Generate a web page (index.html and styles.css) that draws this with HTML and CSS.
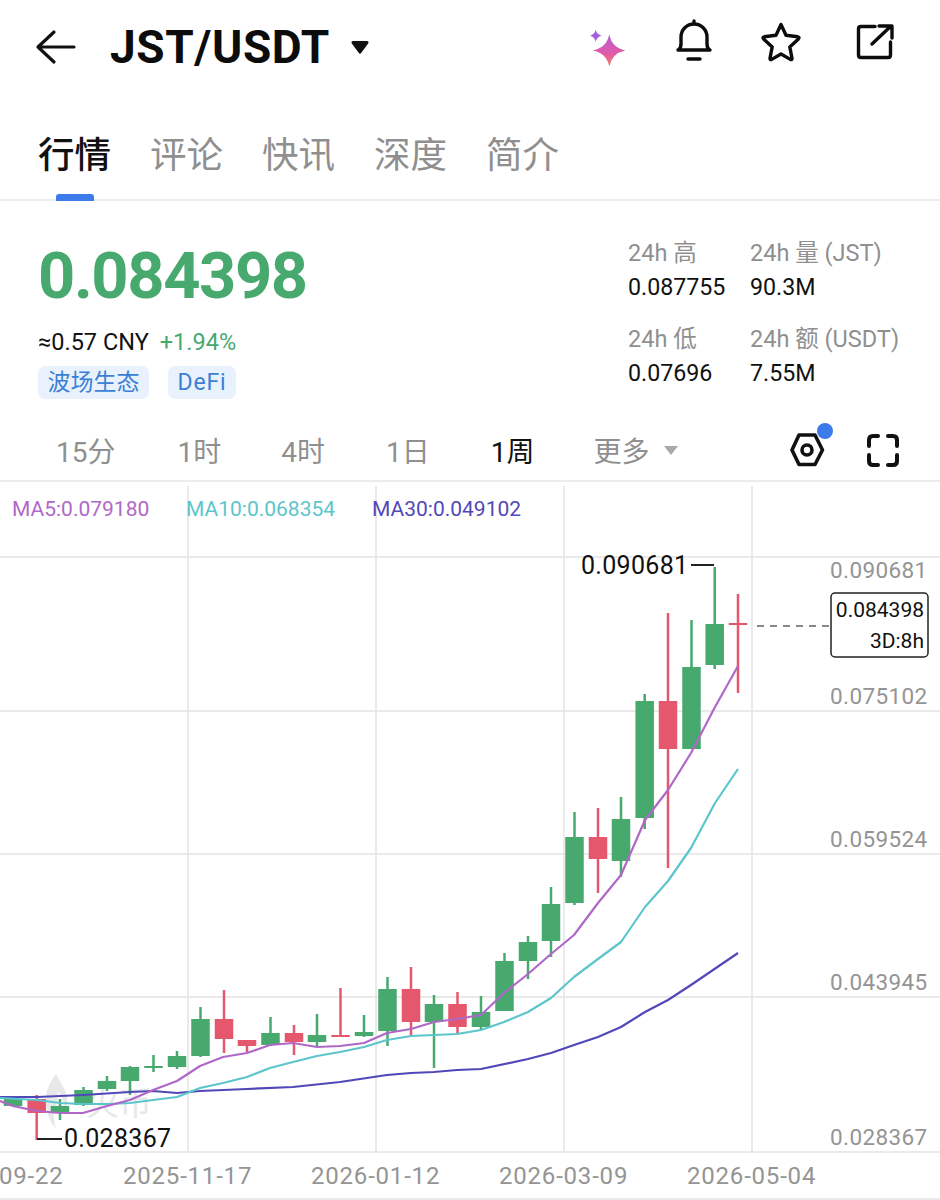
FILE: index.html
```html
<!DOCTYPE html>
<html lang="en">
<head>
    <meta charset="UTF-8">
    <meta name="viewport" content="width=device-width, initial-scale=1.0">
    <title>JST/USDT</title>
    <link rel="stylesheet" href="styles.css">
</head>
<body>
    <header class="header">
        <svg class="back-icon" viewBox="34 28 44 38"><path d="M74 47H38M54 32 38 47l16 15"/></svg>
        <h1 class="pair">JST/USDT</h1>
        <svg class="caret-icon" viewBox="0 0 18 14"><path d="M2 1h14a1.500 1.500 0 0 1 1.200 2.400L10.300 12.800a1.600 1.600 0 0 1-2.600 0L.8 3.400A1.500 1.500 0 0 1 2 1z"/></svg>
        <div class="actions">
            <svg class="action" viewBox="590 18 40 48">
                <defs>
                    <linearGradient id="spark" x1="0" y1="0" x2="0" y2="1">
                        <stop offset="0" stop-color="#b65fd6"/>
                        <stop offset=".6" stop-color="#e25aa8"/>
                        <stop offset="1" stop-color="#f2815a"/>
                    </linearGradient>
                </defs>
                <path fill="url(#spark)" d="M609.300 34q2.200 13.500 16 16.500-13.800 3-16 16.500-2.200-13.500-16.500-16.500 14.300-3 16.500-16.500z"/>
                <path fill="#a05fdc" d="M595.700 29.500q.8 5 6 6.200-5.200 1.200-6 6.300-.8-5.100-6-6.300 5.200-1.200 6-6.200z"/>
            </svg>
            <svg class="action action-bell" viewBox="674 18 40 48">
                <path d="M678 50q3-1.500 3-6v-7a13 13 0 0 1 26 0v7q0 4.500 3 6zM694 24v-3M688 59h12"/>
            </svg>
            <svg class="action action-star" viewBox="761 18 40 48">
                <path d="M781 24.500l5 10.800 11.800 1.500q2 .5 .6 2.100l-8.600 8 2.200 11.300q.2 2-1.700 1.200L781 54l-9.300 5.400q-1.900.8-1.700-1.200l2.200-11.300-8.600-8q-1.400-1.600.6-2.100l11.800-1.500z"/>
            </svg>
            <svg class="action action-share" viewBox="855 18 40 48">
                <path d="M875 26.500h-14q-2.500 0-2.500 2.500v26q0 2.500 2.500 2.500h27q2.500 0 2.500-2.500v-13M872 44l19-18M879 26h13v12"/>
            </svg>
        </div>
    </header>

    <nav class="tabs">
        <a class="tab active">行情</a>
        <a class="tab">评论</a>
        <a class="tab">快讯</a>
        <a class="tab">深度</a>
        <a class="tab">简介</a>
    </nav>

    <section class="quote">
        <div class="quote-main">
            <div class="price">0.084398</div>
            <div class="quote-sub">
                <span class="cny">≈0.57 CNY</span>
                <span class="change">+1.94%</span>
            </div>
            <div class="badges">
                <span class="badge">波场生态</span>
                <span class="badge badge-en">DeFi</span>
            </div>
        </div>
        <div class="stats">
            <div class="stat">
                <span class="stat-label">24h 高</span>
                <span class="stat-value">0.087755</span>
            </div>
            <div class="stat">
                <span class="stat-label">24h 量 (JST)</span>
                <span class="stat-value">90.3M</span>
            </div>
            <div class="stat">
                <span class="stat-label">24h 低</span>
                <span class="stat-value">0.07696</span>
            </div>
            <div class="stat">
                <span class="stat-label">24h 额 (USDT)</span>
                <span class="stat-value">7.55M</span>
            </div>
        </div>
    </section>

    <div class="periods">
        <span class="period p-15m">15分</span>
        <span class="period p-1h">1时</span>
        <span class="period p-4h">4时</span>
        <span class="period p-1d">1日</span>
        <span class="period p-1w active">1周</span>
        <span class="period p-more">更多</span>
        <span class="more-caret"></span>
        <span class="indicator-btn">
            <svg class="hex-icon" viewBox="788 430 38 38"><path d="M799 435h16l7.500 15-7.500 14.500h-16L792 450z"/><circle cx="807" cy="450" r="5"/></svg>
            <span class="dot"></span>
        </span>
        <svg class="full-icon" viewBox="864 432 38 38"><path d="M869 447v-6q0-4 4-4h5M888 437h5q4 0 4 4v6M897 456v6q0 4-4 4h-5M878 466h-5q-4 0-4-4v-6"/></svg>
    </div>

    <div class="chart">
        <svg id="chart" class="chart-svg" viewBox="0 486 940 714">
            <g class="grid">
                <path d="M188 486V1152M376 486V1152M564 486V1152M752 486V1152"/>
                <path d="M0 557H940M0 711H940M0 854H940M0 997H940M0 1152H940M0 1199H940"/>
            </g>

            <g class="watermark">
                <path d="M56 1074q-14 18-9 36 2 12 9 18-4-10-1-20 3-8 3-16 8 8 6 20 6-10 1-22-5-8-9-16z"/>
                <text x="86" y="1115">火币</text>
            </g>

            <g id="candles"></g>

            <polyline class="ma ma30" points="0,1097 37,1097 83,1095 130,1092 153,1091 177,1093 200,1091 247,1089 293,1087 340,1082 387,1075 411,1073 434,1072 457,1070 481,1069 528,1059 551,1053 574,1045 598,1037 621,1027 645,1012 668,1000 691,985 738,953"/>
            <polyline class="ma ma10" points="0,1098 37,1100 60,1103 83,1104 107,1104 130,1103 153,1100 177,1097 200,1088 223,1083 247,1077 270,1068 293,1062 317,1056 340,1052 364,1047 387,1040 411,1036 434,1035 457,1034 481,1030 504,1022 528,1012 551,998 574,977 598,959 621,942 645,907 668,881 691,848 715,803 738,769"/>
            <polyline class="ma ma5" points="0,1101 13,1106 37,1111 60,1113 83,1113 107,1106 130,1100 153,1090 177,1081 200,1066 223,1057 247,1053 270,1045 293,1043 317,1047 340,1046 364,1043 387,1033 411,1029 434,1022 457,1019 481,1015 504,993 528,974 551,954 574,935 598,903 621,875 645,820 668,790 691,753 715,707 738,666"/>

            <text class="extreme" x="581" y="574">0.090681</text>
            <path class="extreme-line" d="M691 565H714M37 1139H62"/>
            <text class="extreme" x="64" y="1147">0.028367</text>

            <text class="legend ma5-text" x="12" y="516">MA5:0.079180</text>
            <text class="legend ma10-text" x="186" y="516">MA10:0.068354</text>
            <text class="legend ma30-text" x="372" y="516">MA30:0.049102</text>

            <text class="axis" x="830" y="578">0.090681</text>
            <text class="axis" x="830" y="704">0.075102</text>
            <text class="axis" x="830" y="847">0.059524</text>
            <text class="axis" x="830" y="990">0.043945</text>
            <text class="axis" x="830" y="1145">0.028367</text>

            <text class="date" x="-1" y="1184">09-22</text>
            <text class="date" x="123" y="1184">2025-11-17</text>
            <text class="date" x="311" y="1184">2026-01-12</text>
            <text class="date" x="499" y="1184">2026-03-09</text>
            <text class="date" x="687" y="1184">2026-05-04</text>

            <path class="last-line" d="M757 626H831"/>
            <rect class="last-box" x="831" y="593" width="97" height="64" rx="4"/>
            <text class="last-text" x="924" y="617">0.084398</text>
            <text class="last-text" x="924" y="648">3D:8h</text>
        </svg>
    </div>

    <script src="chart.js"></script>
</body>
</html>
```

FILE: styles.css
```css
* {
    margin: 0;
    padding: 0;
    box-sizing: border-box;
}

body {
    font-family: Roboto, 'Noto Sans CJK SC', sans-serif;
    background-color: #fff;
    color: #111;
    width: 940px;
    height: 1200px;
    overflow: hidden;
}

/* top bar */
.header {
    display: flex;
    align-items: center;
    height: 94px;
    padding-left: 34px;
}

.back-icon {
    width: 44px;
    height: 38px;
    fill: none;
    stroke: #111;
    stroke-width: 3.2;
    stroke-linecap: round;
    stroke-linejoin: round;
}

.pair {
    font-size: 46px;
    font-weight: 700;
    letter-spacing: 0.6px;
    margin-left: 32px;
    color: #0c0c0c;
}

.caret-icon {
    width: 18px;
    height: 14px;
    margin-left: 21px;
    fill: #111;
}

.actions {
    display: flex;
    margin-left: auto;
    padding-right: 45px;
    margin-top: -10px;
}

.action {
    width: 40px;
    height: 48px;
    fill: none;
    stroke: #0c0c0c;
    stroke-width: 3.4;
    stroke-linecap: round;
    stroke-linejoin: round;
}

.action:first-child {
    stroke: none;
}

.action-bell {
    margin-left: 44px;
}

.action-star {
    margin-left: 47px;
}

.action-share {
    margin-left: 54px;
}

/* tabs */
.tabs {
    display: flex;
    gap: 39px;
    height: 107px;
    padding: 38px 0 0 38px;
    border-bottom: 2px solid #ebeced;
}

.tab {
    position: relative;
    font-size: 36.5px;
    line-height: 48px;
    color: #8f8f8f;
    height: 69px;
}

.tab.active {
    color: #111;
    font-weight: 500;
}

.tab.active::after {
    content: '';
    position: absolute;
    left: 18px;
    bottom: 0;
    width: 38px;
    height: 7px;
    border-radius: 3px 3px 0 0;
    background-color: #3b7bea;
}

/* price block */
.quote {
    display: flex;
    justify-content: space-between;
    height: 218px;
    padding: 37px 0 0 38px;
}

.price {
    font-size: 65px;
    font-weight: 700;
    letter-spacing: -1.4px;
    line-height: 76px;
    color: #48a96f;
}

.quote-sub {
    display: flex;
    gap: 11px;
    margin-top: 13px;
    font-size: 23.5px;
    line-height: 30px;
}

.change {
    color: #48a96f;
}

.badges {
    display: flex;
    gap: 19px;
    margin-top: 9px;
}

.badge {
    padding: 0 9.500px;
    font-size: 23px;
    line-height: 33px;
    border-radius: 7px;
    color: #3b7fd6;
    background-color: #e9f2fc;
}

.badge-en {
    letter-spacing: 0.8px;
}

.stats {
    display: grid;
    grid-template-columns: 122px 190px;
    grid-auto-rows: 86px;
}

.stat {
    display: flex;
    flex-direction: column;
    gap: 4px;
}

.stat-label {
    font-size: 23.5px;
    line-height: 30px;
    color: #8f8f8f;
}

.stat-value {
    font-size: 23.2px;
    line-height: 30px;
    color: #111;
}

/* period row */
.periods {
    display: flex;
    align-items: center;
    height: 63px;
    padding-left: 56px;
    border-bottom: 2px solid #ebeced;
    font-size: 28px;
    color: #8f8f8f;
}

.period.active {
    color: #111;
}

.p-1h {
    margin-left: 62px;
}

.p-4h {
    margin-left: 60px;
}

.p-1d {
    margin-left: 61px;
}

.p-1w {
    margin-left: 61px;
}

.p-more {
    margin-left: 59px;
}

.more-caret {
    width: 0;
    height: 0;
    margin: 2px 0 0 14px;
    border-left: 7px solid transparent;
    border-right: 7px solid transparent;
    border-top: 9px solid #a9a9a9;
}

.indicator-btn {
    position: relative;
    display: flex;
    margin-left: auto;
    margin-top: -2px;
}

.hex-icon {
    width: 38px;
    height: 38px;
    fill: none;
    stroke: #111;
    stroke-width: 3.6;
    stroke-linejoin: round;
}

.dot {
    position: absolute;
    top: -7px;
    right: -7px;
    width: 16px;
    height: 16px;
    border-radius: 50%;
    background-color: #3b7bea;
}

.full-icon {
    width: 38px;
    height: 38px;
    margin: 0 38px 0 38px;
    fill: none;
    stroke: #111;
    stroke-width: 4;
    stroke-linecap: round;
}

/* chart */
.chart {
    margin-top: 4px;
}

.chart-svg {
    display: block;
    width: 940px;
    height: 714px;
}

.grid path {
    fill: none;
    stroke: #e3e3e3;
    stroke-width: 1.5;
}

.watermark {
    fill: #e8e8e8;
}

.watermark text {
    font-size: 33px;
}

.ma {
    fill: none;
    stroke-width: 2.2;
    stroke-linejoin: round;
}

.ma5 {
    stroke: #b068c8;
}

.ma10 {
    stroke: #5cc5cb;
}

.ma30 {
    stroke: #5148b8;
}

.up {
    fill: #48a96f;
    stroke: #48a96f;
}

.down {
    fill: #e5576c;
    stroke: #e5576c;
}

.wick {
    stroke-width: 2.5;
}

.body {
    stroke: none;
}

.legend {
    font-size: 21px;
}

.ma5-text {
    fill: #b068c8;
}

.ma10-text {
    fill: #5cc5cb;
}

.ma30-text {
    fill: #5148b8;
}

.axis {
    font-size: 22.5px;
    letter-spacing: 0.4px;
    fill: #949494;
}

.date {
    font-size: 24px;
    letter-spacing: 0.8px;
    fill: #949494;
}

.extreme {
    font-size: 25px;
    letter-spacing: 0.3px;
    fill: #111;
}

.extreme-line {
    fill: none;
    stroke: #222;
    stroke-width: 2;
}

.last-line {
    fill: none;
    stroke: #888;
    stroke-width: 2;
    stroke-dasharray: 7 6;
}

.last-box {
    fill: #fff;
    stroke: #222;
    stroke-width: 1.5;
}

.last-text {
    font-size: 21px;
    fill: #111;
    text-anchor: end;
}
```

FILE: chart.js
```js
// x, open/close top, open/close bottom, high, low, direction
const candles = [
    [13, 1099, 1106, 1099, 1106, 'up'],
    [36.7, 1099, 1113, 1095, 1140, 'down'],
    [60, 1106, 1113, 1099, 1120, 'up'],
    [83.5, 1090, 1105, 1087, 1106, 'up'],
    [107, 1081, 1089, 1076, 1091, 'up'],
    [130, 1067, 1081, 1066, 1095, 'up'],
    [153.5, 1066, 1068, 1055, 1072, 'up'],
    [177, 1056, 1067, 1051, 1069, 'up'],
    [200.5, 1019, 1056, 1007, 1057, 'up'],
    [224, 1019, 1039, 990, 1053, 'down'],
    [247, 1040, 1046, 1040, 1052, 'down'],
    [270.5, 1033, 1045, 1017, 1046, 'up'],
    [294, 1033, 1042, 1025, 1055, 'down'],
    [317, 1035, 1042, 1014, 1047, 'up'],
    [340.5, 1035, 1037, 988, 1037, 'down'],
    [364, 1032, 1036, 1015, 1037, 'up'],
    [387.5, 989, 1031, 977, 1046, 'up'],
    [411, 989, 1022, 967, 1035, 'down'],
    [434, 1004, 1022, 995, 1068, 'up'],
    [457.5, 1004, 1027, 992, 1033, 'down'],
    [481, 1012, 1027, 996, 1030, 'up'],
    [504.5, 961, 1011, 953, 1011, 'up'],
    [528, 942, 961, 936, 979, 'up'],
    [551, 904, 941, 887, 957, 'up'],
    [574.5, 837, 903, 812, 905, 'up'],
    [598, 837, 859, 808, 893, 'down'],
    [621, 819, 861, 797, 877, 'up'],
    [644.7, 701, 818, 694, 829, 'up'],
    [668, 701, 749, 613, 868, 'down'],
    [691.5, 667, 749, 620, 749, 'up'],
    [714.7, 624, 665, 567, 669, 'up'],
    [738, 623, 625, 594, 693, 'down'],
];

const layer = document.getElementById('candles');
const bodyWidth = 18.5;

function addShape(tag, attrs, parent) {
    const el = document.createElementNS('http://www.w3.org/2000/svg', tag);
    Object.keys(attrs).forEach((key) => el.setAttribute(key, attrs[key]));
    parent.appendChild(el);
}

candles.forEach(([x, top, bottom, high, low, dir]) => {
    const group = document.createElementNS('http://www.w3.org/2000/svg', 'g');
    group.setAttribute('class', dir);
    addShape('line', { class: 'wick', x1: x, x2: x, y1: high, y2: low }, group);
    addShape('rect', {
        class: 'body',
        x: x - bodyWidth / 2,
        y: top,
        width: bodyWidth,
        height: bottom - top,
    }, group);
    layer.appendChild(group);
});
```
